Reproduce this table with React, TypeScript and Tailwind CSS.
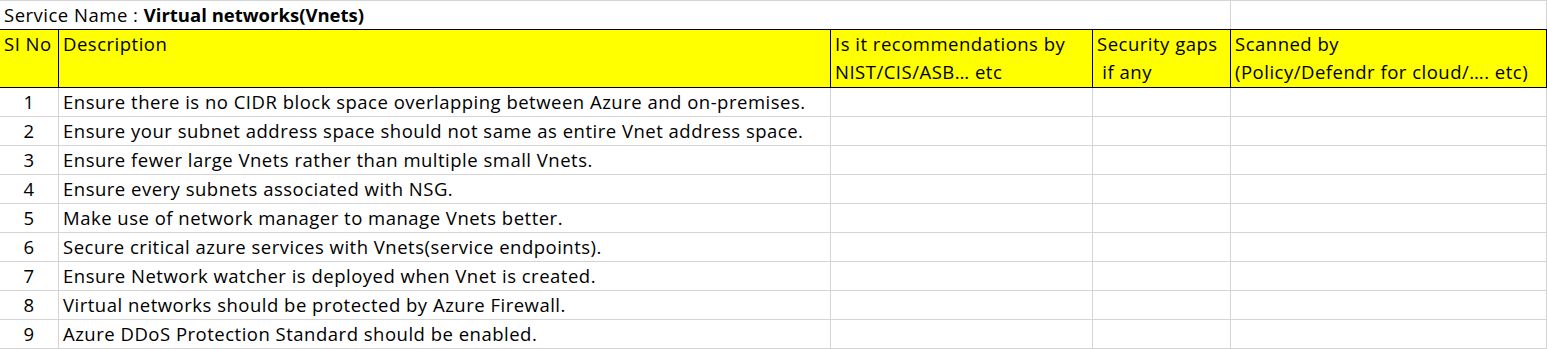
const rows = [
  'Ensure there is no CIDR block space overlapping between Azure and on-premises.',
  'Ensure your subnet address space should not same as entire Vnet address space.',
  'Ensure fewer large Vnets rather than multiple small Vnets.',
  'Ensure every subnets associated with NSG.',
  'Make use of network manager to manage Vnets better.',
  'Secure critical azure services with Vnets(service endpoints).',
  'Ensure Network watcher is deployed when Vnet is created.',
  'Virtual networks should be protected by Azure Firewall.',
  'Azure DDoS Protection Standard should be enabled.',
]

const cols = 'grid grid-cols-[59px_772px_262px_138px_316px]'

export default function App() {
  return (
    <div className="h-[349px] w-[1547px] overflow-hidden bg-white font-['Open_Sans',sans-serif] text-[18.5px] tracking-[0.5px] text-black">
      <div className="flex h-[29px] border-t border-[#d4d4d4]">
        <div className="w-[1231px] border-r border-[#d4d4d4] px-1 leading-[28px]">
          Service Name : <span className="font-bold tracking-normal">Virtual networks(Vnets)</span>
        </div>
        <div className="w-[316px] border-r border-[#d4d4d4]" />
      </div>

      <div className={`${cols} h-[59px] border-y border-black bg-[#ffff00] leading-[28px]`}>
        <div className="border-r border-black px-1">SI No</div>
        <div className="border-r border-black px-1">Description</div>
        <div className="border-r border-black px-1">
          Is it recommendations by
          <br />
          NIST/CIS/ASB… etc
        </div>
        <div className="border-r border-black px-1 whitespace-pre">
          {'Security gaps\n if any'}
        </div>
        <div className="border-r border-black px-1 whitespace-nowrap">
          Scanned by
          <br />
          (Policy/Defendr for cloud/…. etc)
        </div>
      </div>

      {rows.map((text, i) => (
        <div key={i} className={`${cols} h-[29px] border-b border-[#d4d4d4] leading-[28px]`}>
          <div className="border-r border-[#d4d4d4] text-center">{i + 1}</div>
          <div className="border-r border-[#d4d4d4] px-1 whitespace-nowrap">{text}</div>
          <div className="border-r border-[#d4d4d4]" />
          <div className="border-r border-[#d4d4d4]" />
          <div className="border-r border-[#d4d4d4]" />
        </div>
      ))}
    </div>
  )
}
